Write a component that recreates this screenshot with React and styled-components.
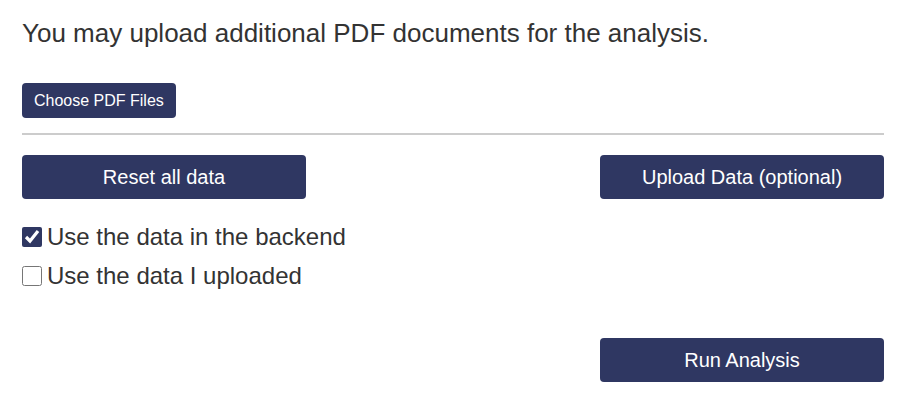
import React from "react";
import styled, { createGlobalStyle } from "styled-components";

const Global = createGlobalStyle`
  html, body { margin: 0; padding: 0; background: #fff; }
  body { font-family: "Liberation Sans", Arial, sans-serif; color: #333; }
`;

const NAVY = "#2f3762";

const Page = styled.div`
  padding: 18px 22px 0 22px;
  display: flex;
  flex-direction: column;
`;

const Intro = styled.p`
  margin: 0;
  font-size: 26px;
  line-height: 30px;
  color: #333;
`;

const Button = styled.button`
  background: ${NAVY};
  color: #fff;
  border: none;
  border-radius: 4px;
  font-family: "Liberation Sans", Arial, sans-serif;
  font-size: ${(p) => (p.$small ? "16px" : "20px")};
  height: ${(p) => (p.$small ? "35px" : "44px")};
  width: ${(p) => (p.$small ? "auto" : "284px")};
  padding: ${(p) => (p.$small ? "0 12px" : "0")};
  cursor: pointer;
`;

const FileRow = styled.div`
  margin-top: 35px;
  display: flex;
`;

const Divider = styled.hr`
  margin: 15px 0 0 0;
  border: none;
  border-top: 2px solid #ccc;
  height: 0;
`;

const ActionRow = styled.div`
  margin-top: 20px;
  display: flex;
  justify-content: space-between;
`;

const Options = styled.div`
  margin-top: 24px;
  display: flex;
  flex-direction: column;
  gap: 11px;
`;

const OptionLabel = styled.label`
  display: flex;
  align-items: center;
  gap: 5px;
  font-size: 24px;
  line-height: 28px;
  color: #333;
`;

const Check = styled.input`
  width: 20px;
  height: 20px;
  margin: 0;
  accent-color: ${NAVY};
`;

const RunRow = styled.div`
  margin-top: 48px;
  display: flex;
  justify-content: flex-end;
`;

export default function App() {
  const [backend, setBackend] = React.useState(true);
  const [uploaded, setUploaded] = React.useState(false);
  return (
    <>
      <Global />
      <Page>
        <Intro>You may upload additional PDF documents for the analysis.</Intro>
        <FileRow>
          <Button $small>Choose PDF Files</Button>
        </FileRow>
        <Divider />
        <ActionRow>
          <Button>Reset all data</Button>
          <Button>Upload Data (optional)</Button>
        </ActionRow>
        <Options>
          <OptionLabel>
            <Check type="checkbox" checked={backend} onChange={(e) => setBackend(e.target.checked)} />
            Use the data in the backend
          </OptionLabel>
          <OptionLabel>
            <Check type="checkbox" checked={uploaded} onChange={(e) => setUploaded(e.target.checked)} />
            Use the data I uploaded
          </OptionLabel>
        </Options>
        <RunRow>
          <Button>Run Analysis</Button>
        </RunRow>
      </Page>
    </>
  );
}
